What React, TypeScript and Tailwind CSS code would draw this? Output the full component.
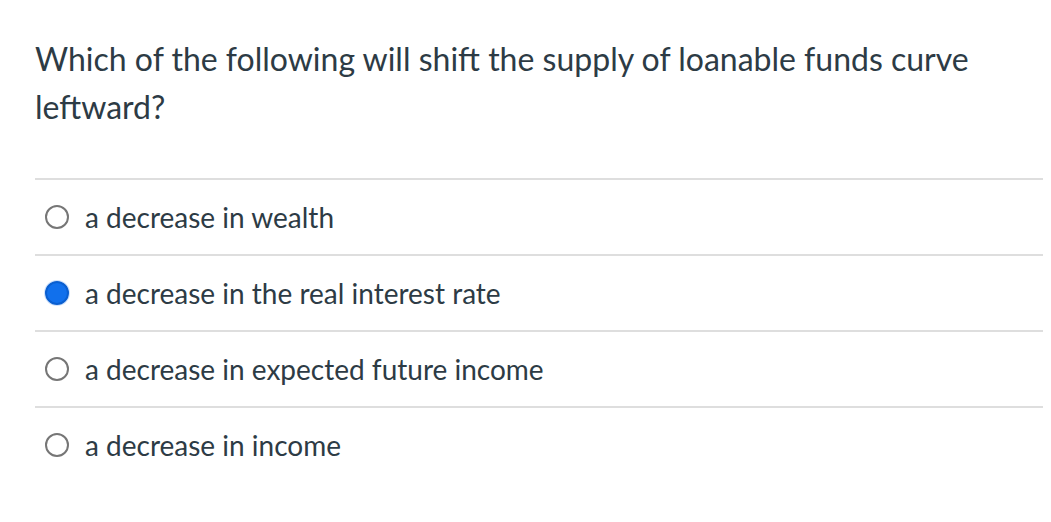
const answers = [
  { text: "a decrease in wealth", checked: false },
  { text: "a decrease in the real interest rate", checked: true },
  { text: "a decrease in expected future income", checked: false },
  { text: "a decrease in income", checked: false },
];

function Radio({ checked }: { checked: boolean }) {
  if (checked) {
    return (
      <span className="flex h-[24px] w-[24px] shrink-0 items-center justify-center rounded-full bg-white ring-1 ring-[#cfe1fb]">
        <span className="h-[24px] w-[24px] rounded-full border-2 border-[#0a5fd0] bg-[#1170ec]"></span>
      </span>
    );
  }
  return <span className="h-[24px] w-[24px] shrink-0 rounded-full border-2 border-[#767676] bg-white"></span>;
}

export default function App() {
  return (
    <div className="min-h-[522px] w-[1051px] bg-white pl-[35px] pr-[8px] pt-[35px] text-[#2d3b45] font-['Lato','Liberation_Sans',sans-serif]">
      <p className="text-[32px] leading-[48px] max-w-[990px]">
        Which of the following will shift the supply of loanable funds curve leftward?
      </p>
      <div className="mt-[47px]">
        {answers.map((a) => (
          <div key={a.text} className="flex h-[76px] items-center gap-[16px] border-t-2 border-[#dedede] pl-[10px]">
            <Radio checked={a.checked} />
            <span className="text-[28px] leading-none">{a.text}</span>
          </div>
        ))}
      </div>
    </div>
  );
}
